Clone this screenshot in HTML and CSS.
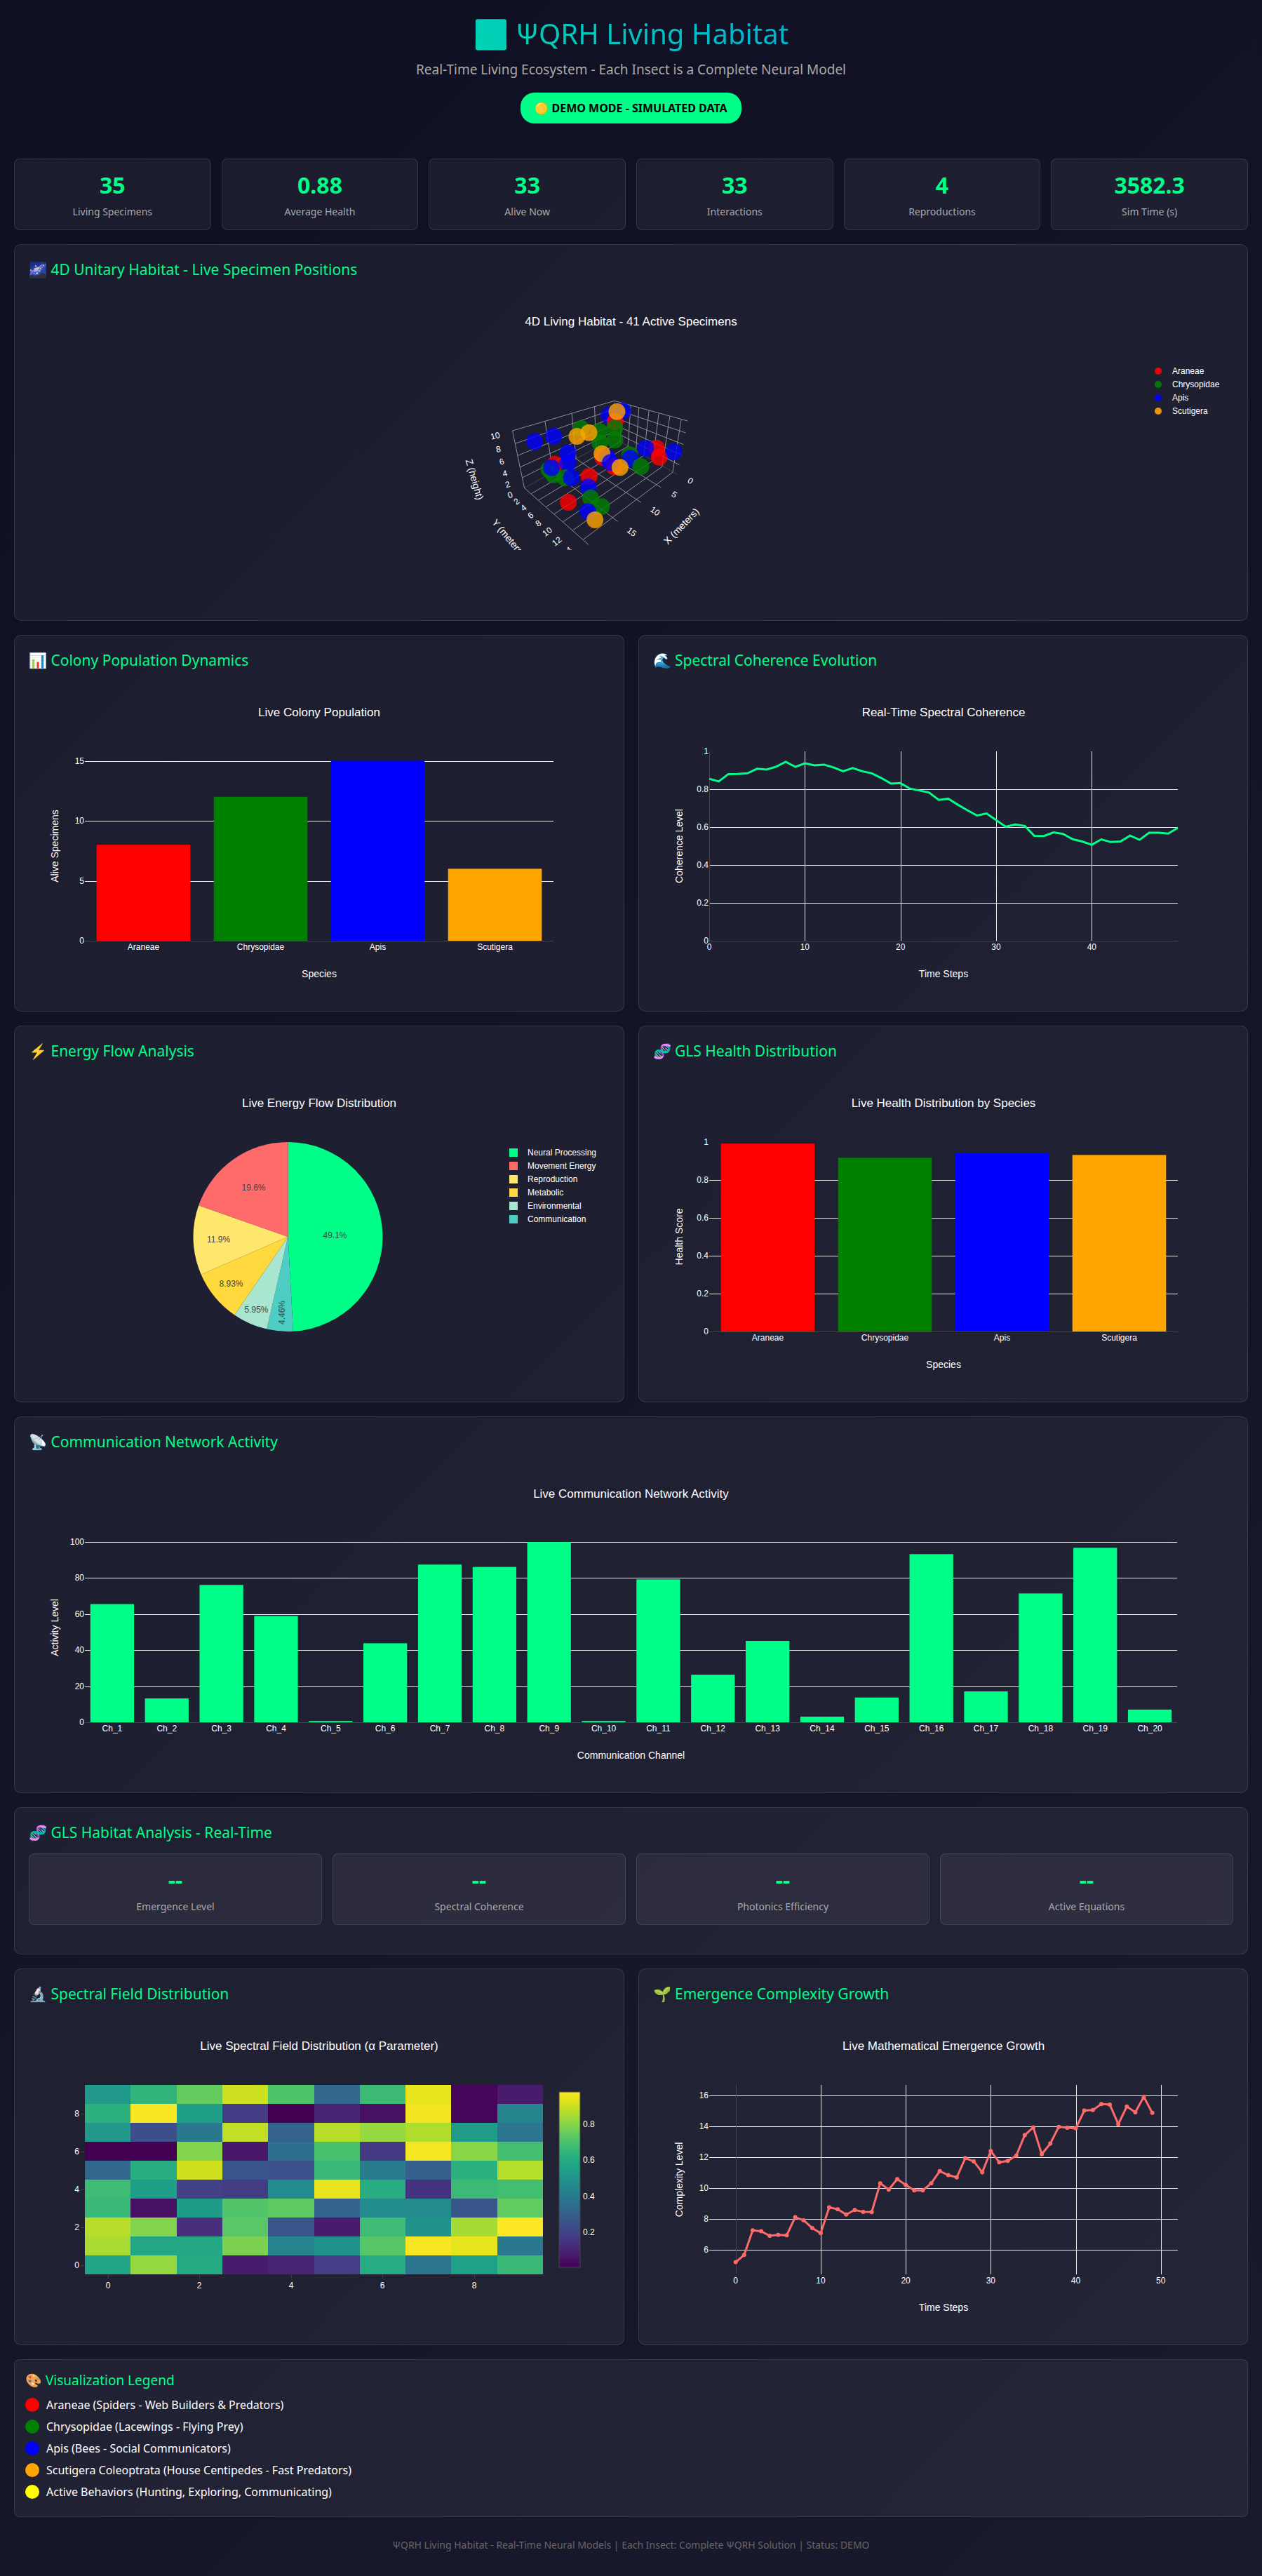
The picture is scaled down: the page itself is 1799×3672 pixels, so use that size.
FILE: index.html
```html
<!DOCTYPE html>
<html lang="en">
<head>
<meta charset="utf-8">
<meta name="viewport" content="width=device-width, initial-scale=1">
<title>ΨQRH Living Habitat</title>
<link rel="stylesheet" href="styles.css">
</head>
<body>
<header class="header">
  <h1 class="header-title">🌌 ΨQRH Living Habitat</h1>
  <p class="header-subtitle">Real-Time Living Ecosystem - Each Insect is a Complete Neural Model</p>
  <div class="status-badge">🟡 DEMO MODE - SIMULATED DATA</div>
</header>

<main class="dashboard">
  <section class="stats stats-six" aria-label="Habitat statistics">
    <div class="stat"><div class="stat-value">35</div><div class="stat-label">Living Specimens</div></div>
    <div class="stat"><div class="stat-value">0.88</div><div class="stat-label">Average Health</div></div>
    <div class="stat"><div class="stat-value">33</div><div class="stat-label">Alive Now</div></div>
    <div class="stat"><div class="stat-value">33</div><div class="stat-label">Interactions</div></div>
    <div class="stat"><div class="stat-value">4</div><div class="stat-label">Reproductions</div></div>
    <div class="stat"><div class="stat-value">3582.3</div><div class="stat-label">Sim Time (s)</div></div>
  </section>

  <section class="panel">
    <h2 class="panel-title">🌌 4D Unitary Habitat - Live Specimen Positions</h2>
    <div class="chart" id="habitat"></div>
  </section>

  <div class="columns">
    <section class="panel">
      <h2 class="panel-title">📊 Colony Population Dynamics</h2>
      <div class="chart" id="population"></div>
    </section>
    <section class="panel">
      <h2 class="panel-title">🌊 Spectral Coherence Evolution</h2>
      <div class="chart" id="coherence"></div>
    </section>
    <section class="panel">
      <h2 class="panel-title">⚡ Energy Flow Analysis</h2>
      <div class="chart" id="energy"></div>
    </section>
    <section class="panel">
      <h2 class="panel-title">🧬 GLS Health Distribution</h2>
      <div class="chart" id="health"></div>
    </section>
  </div>

  <section class="panel">
    <h2 class="panel-title">📡 Communication Network Activity</h2>
    <div class="chart" id="network"></div>
  </section>

  <section class="panel panel-analysis">
    <h2 class="panel-title">🧬 GLS Habitat Analysis - Real-Time</h2>
    <div class="stats stats-four">
      <div class="stat"><div class="stat-value">--</div><div class="stat-label">Emergence Level</div></div>
      <div class="stat"><div class="stat-value">--</div><div class="stat-label">Spectral Coherence</div></div>
      <div class="stat"><div class="stat-value">--</div><div class="stat-label">Photonics Efficiency</div></div>
      <div class="stat"><div class="stat-value">--</div><div class="stat-label">Active Equations</div></div>
    </div>
  </section>

  <div class="columns">
    <section class="panel">
      <h2 class="panel-title">🔬 Spectral Field Distribution</h2>
      <div class="chart" id="field"></div>
    </section>
    <section class="panel">
      <h2 class="panel-title">🌱 Emergence Complexity Growth</h2>
      <div class="chart" id="growth"></div>
    </section>
  </div>

  <section class="legend">
    <h2 class="legend-title">🎨 Visualization Legend</h2>
    <ul class="legend-list">
      <li class="legend-item"><span class="dot dot-araneae"></span>Araneae (Spiders - Web Builders &amp; Predators)</li>
      <li class="legend-item"><span class="dot dot-chrysopidae"></span>Chrysopidae (Lacewings - Flying Prey)</li>
      <li class="legend-item"><span class="dot dot-apis"></span>Apis (Bees - Social Communicators)</li>
      <li class="legend-item"><span class="dot dot-scutigera"></span>Scutigera Coleoptrata (House Centipedes - Fast Predators)</li>
      <li class="legend-item"><span class="dot dot-active"></span>Active Behaviors (Hunting, Exploring, Communicating)</li>
    </ul>
  </section>
</main>

<footer class="footer">ΨQRH Living Habitat - Real-Time Neural Models | Each Insect: Complete ΨQRH Solution | Status: DEMO</footer>
<script src="charts.js"></script>
</body>
</html>
```
FILE: styles.css
```css
* {
  box-sizing: border-box;
  margin: 0;
  padding: 0;
}

body {
  min-height: 100vh;
  padding: 20px;
  background: linear-gradient(135deg, #0f0f23 0%, #1a1a2e 100%);
  color: #fff;
  font-family: "Noto Sans", sans-serif;
  font-size: 16px;
}

.header {
  display: flex;
  flex-direction: column;
  align-items: center;
  padding-bottom: 50px;
  text-align: center;
}

.header-title {
  width: 100%;
  background: linear-gradient(45deg, #00ff88, #0088ff);
  background-clip: text;
  -webkit-background-clip: text;
  color: transparent;
  font-size: 40px;
  font-weight: 400;
  line-height: 56px;
}

.header-subtitle {
  margin: 10px 0 20px;
  color: #aaa;
  font-size: 19px;
  line-height: 26px;
}

.status-badge {
  padding: 10px 20px;
  border-radius: 20px;
  background: #00ff88;
  color: #000;
  font-weight: 700;
  line-height: 24px;
}

.dashboard {
  display: flex;
  flex-direction: column;
  gap: 20px;
}

.stats {
  display: grid;
  gap: 15px;
}

.stats-six {
  grid-template-columns: repeat(6, 1fr);
}

.stats-four {
  grid-template-columns: repeat(4, 1fr);
}

.stat {
  padding: 15px;
  border: 1px solid rgba(255, 255, 255, 0.1);
  border-radius: 8px;
  background: rgba(255, 255, 255, 0.05);
  text-align: center;
}

.stat-value {
  margin-bottom: 6px;
  color: #00ff88;
  font-size: 32px;
  font-weight: 700;
  line-height: 44px;
}

.stat-label {
  color: #aaa;
  font-size: 14px;
  line-height: 20px;
}

.columns {
  display: grid;
  grid-template-columns: repeat(2, minmax(0, 1fr));
  gap: 20px;
}

.panel {
  min-width: 0;
  padding: 20px;
  border: 1px solid rgba(255, 255, 255, 0.1);
  border-radius: 10px;
  background: rgba(255, 255, 255, 0.05);
}

.panel-analysis {
  padding-bottom: 41px;
}

.panel-title {
  margin-bottom: 15px;
  color: #00ff88;
  font-size: 21px;
  font-weight: 400;
  line-height: 30px;
}

.chart {
  height: 450px;
}

.chart-svg {
  display: block;
  width: 100%;
  height: 100%;
}

.chart-svg text {
  fill: #fff;
  font-family: "Liberation Sans", Arial, sans-serif;
  font-size: 12px;
}

.chart-svg .chart-title {
  font-size: 17px;
}

.chart-svg .axis-title {
  font-size: 14px;
}

.chart-svg .slice-label {
  fill: #444;
}

.legend {
  padding: 15px;
  border: 1px solid rgba(255, 255, 255, 0.1);
  border-radius: 8px;
  background: rgba(255, 255, 255, 0.05);
}

.legend-title {
  margin-bottom: 10px;
  color: #00ff88;
  font-size: 19px;
  font-weight: 400;
  line-height: 28px;
}

.legend-list {
  list-style: none;
}

.legend-item {
  display: flex;
  align-items: center;
  gap: 10px;
  padding-bottom: 9px;
  line-height: 22px;
}

.dot {
  width: 20px;
  height: 20px;
  border-radius: 50%;
}

.dot-araneae { background: #ff0000; }
.dot-chrysopidae { background: #008000; }
.dot-apis { background: #0000ff; }
.dot-scutigera { background: #ffa500; }
.dot-active { background: #ffff00; }

.footer {
  padding: 30px 0 12px;
  color: #666;
  font-size: 14px;
  line-height: 20px;
  text-align: center;
}
```
FILE: charts.js
```js
const NS = "http://www.w3.org/2000/svg";
const HEIGHT = 450;
const MARGIN = { left: 80, right: 80, top: 100, bottom: 80 };
const GRID = "#eee";
const ZERO = "#444";
const SPECIES = ["Araneae", "Chrysopidae", "Apis", "Scutigera"];
const SPECIES_COLORS = ["#ff0000", "#008000", "#0000ff", "#ffa500"];

function add(parent, tag, attrs, text) {
  const node = document.createElementNS(NS, tag);
  for (const key in attrs) node.setAttribute(key, attrs[key]);
  if (text !== undefined) node.textContent = text;
  parent.appendChild(node);
  return node;
}

function begin(id, title) {
  const host = document.getElementById(id);
  host.replaceChildren();
  const width = host.clientWidth;
  const svg = add(host, "svg", { class: "chart-svg", role: "img", "aria-label": title });
  add(svg, "text", { class: "chart-title", x: width / 2, y: 50, "text-anchor": "middle" }, title);
  return {
    svg, width,
    left: MARGIN.left, right: width - MARGIN.right,
    top: MARGIN.top, bottom: HEIGHT - MARGIN.bottom
  };
}

function hline(c, y, color) {
  add(c.svg, "line", { x1: c.left, x2: c.right, y1: y, y2: y, stroke: color, "shape-rendering": "crispEdges" });
}

function vline(c, x, color) {
  add(c.svg, "line", { x1: x, x2: x, y1: c.top, y2: c.bottom, stroke: color, "shape-rendering": "crispEdges" });
}

function axisTitles(c, xTitle, yTitle) {
  add(c.svg, "text", { class: "axis-title", x: (c.left + c.right) / 2, y: 422, "text-anchor": "middle" }, xTitle);
  const mid = (c.top + c.bottom) / 2;
  add(c.svg, "text", { class: "axis-title", transform: `translate(42 ${mid}) rotate(-90)`, "text-anchor": "middle" }, yTitle);
}

function yTick(c, y, label) {
  add(c.svg, "text", { x: c.left - 1, y: y + 4, "text-anchor": "end" }, label);
}

function xTick(c, x, label) {
  add(c.svg, "text", { x, y: c.bottom + 13, "text-anchor": "middle" }, label);
}

function barChart(id, o) {
  const c = begin(id, o.title);
  const sy = v => c.bottom - (v / o.max) * (c.bottom - c.top);
  o.ticks.forEach(t => {
    if (t > 0 && t < o.max) hline(c, Math.round(sy(t)), GRID);
    yTick(c, sy(t), t);
  });
  const band = (c.right - c.left) / o.values.length;
  o.values.forEach((v, i) => {
    add(c.svg, "rect", {
      x: c.left + band * (i + 0.1), y: sy(v), width: band * 0.8, height: c.bottom - sy(v),
      fill: o.colors[i % o.colors.length]
    });
    xTick(c, c.left + band * (i + 0.5), o.labels[i]);
  });
  hline(c, c.bottom, ZERO);
  axisTitles(c, o.xTitle, o.yTitle);
}

function lineChart(id, o) {
  const c = begin(id, o.title);
  const sx = v => c.left + (v - o.x[0]) / (o.x[1] - o.x[0]) * (c.right - c.left);
  const sy = v => c.bottom - (v - o.y[0]) / (o.y[1] - o.y[0]) * (c.bottom - c.top);
  o.xTicks.forEach(t => {
    if (t !== 0) vline(c, Math.round(sx(t)), GRID);
    xTick(c, sx(t), t);
  });
  o.yTicks.forEach(t => {
    if (t > o.y[0] && t < o.y[1]) hline(c, Math.round(sy(t)), GRID);
    yTick(c, sy(t), t);
  });
  vline(c, Math.round(sx(0)), ZERO);
  if (o.y[0] === 0) hline(c, c.bottom, ZERO);
  add(c.svg, "polyline", {
    points: o.values.map((v, i) => `${sx(i)},${sy(v)}`).join(" "),
    fill: "none", stroke: o.color, "stroke-width": 3
  });
  if (o.markers) {
    o.values.forEach((v, i) => add(c.svg, "circle", { cx: sx(i), cy: sy(v), r: 3, fill: o.color }));
  }
  axisTitles(c, "Time Steps", o.yTitle);
}

function pieChart(id) {
  const c = begin(id, "Live Energy Flow Distribution");
  const slices = [
    ["Neural Processing", 49.1, "#00ff88", "49.1%", 67, -2],
    ["Movement Energy", 19.6, "#ff6b6b", "19.6%", -49, -70],
    ["Reproduction", 11.9, "#ffe66d", "11.9%", -99, 4],
    ["Metabolic", 8.93, "#ffd93d", "8.93%", -81, 67],
    ["Environmental", 5.95, "#a8e6cf", "5.95%", -45, 104],
    ["Communication", 4.46, "#4ecdc4", "4.46%", -9, 108]
  ];
  const legendWidth = 169;
  const cx = (c.left + c.width - legendWidth) / 2;
  const cy = (c.top + c.bottom) / 2;
  const r = 135;
  const total = slices.reduce((sum, s) => sum + s[1], 0);
  const order = [slices[0], ...slices.slice(1).reverse()];
  let angle = 0;
  order.forEach(([, value, color, label, dx, dy]) => {
    const end = angle + value / total * Math.PI * 2;
    add(c.svg, "path", {
      d: `M${cx},${cy}L${cx + r * Math.sin(angle)},${cy - r * Math.cos(angle)}` +
         `A${r},${r} 0 0 1 ${cx + r * Math.sin(end)},${cy - r * Math.cos(end)}Z`,
      fill: color
    });
    const turn = value < 5 ? " rotate(-90)" : "";
    add(c.svg, "text", {
      class: "slice-label", y: 4, "text-anchor": "middle",
      transform: `translate(${cx + dx} ${cy + dy})${turn}`
    }, label);
    angle = end;
  });
  const x = c.width - 137;
  slices.forEach(([name, , color], i) => {
    const y = 115 + i * 19;
    add(c.svg, "rect", { x: x - 6, y: y - 6, width: 12, height: 12, fill: color });
    add(c.svg, "text", { x: x + 20, y: y + 4 }, name);
  });
}

const VIRIDIS = ["440154", "48186a", "472d7b", "424086", "3b528b", "33638d", "2c728e", "26828e", "21918c",
  "1fa088", "28ae80", "3fbc73", "5ec962", "84d44b", "addc30", "d8e219", "fde725"]
  .map(h => [0, 2, 4].map(i => parseInt(h.slice(i, i + 2), 16)));

function viridis(v) {
  const p = Math.min(v, 0.9999) * (VIRIDIS.length - 1);
  const i = Math.floor(p);
  const mix = VIRIDIS[i].map((a, k) => Math.round(a + (VIRIDIS[i + 1][k] - a) * (p - i)));
  return `rgb(${mix.join()})`;
}

/* Field rows, from y = 9 down to y = 0. */
const FIELD = [
  [.53, .65, .76, .92, .72, .33, .68, .965, .01, .07],
  [.635, .995, .56, .175, 0, .1, .04, .98, .01, .45],
  [.535, .235, .4, .905, .305, .89, .84, .88, .55, .385],
  [0, 0, .81, .06, .36, .71, .165, .985, .82, .7],
  [.33, .62, .925, .26, .245, .67, .41, .3, .635, .885],
  [.685, .555, .19, .17, .47, .965, .62, .145, .68, .695],
  [.67, .04, .54, .725, .75, .31, .48, .475, .265, .755],
  [.89, .81, .13, .74, .26, .07, .685, .51, .865, 1],
  [.87, .59, .6, .8, .44, .5, .735, .99, .96, .4],
  [.58, .835, .605, .075, .1, .18, .61, .39, .565, .67]
];

function heatmap(id) {
  const c = begin(id, "Live Spectral Field Distribution (α Parameter)");
  c.right = c.width - 95;
  const w = (c.right - c.left) / 10;
  const h = (c.bottom - c.top) / 10;
  FIELD.forEach((row, r) => row.forEach((v, i) => {
    const x0 = Math.round(c.left + i * w);
    const x1 = Math.round(c.left + (i + 1) * w);
    add(c.svg, "rect", { x: x0, y: c.top + r * h, width: x1 - x0, height: h, fill: viridis(v) });
  }));
  for (let t = 0; t < 10; t += 2) {
    const x = Math.round(c.left + (t + 0.5) * w);
    const y = Math.round(c.bottom - (t + 0.5) * h);
    add(c.svg, "line", { x1: x, x2: x, y1: c.bottom + 1, y2: c.bottom + 6, stroke: ZERO, "shape-rendering": "crispEdges" });
    add(c.svg, "line", { x1: c.left - 6, x2: c.left - 1, y1: y, y2: y, stroke: ZERO, "shape-rendering": "crispEdges" });
    add(c.svg, "text", { x, y: c.bottom + 20, "text-anchor": "middle" }, t);
    add(c.svg, "text", { x: c.left - 8, y: y + 4, "text-anchor": "end" }, t);
  }
  const gradient = add(add(c.svg, "defs", {}), "linearGradient", { id: "scale", x1: 0, y1: 1, x2: 0, y2: 0 });
  VIRIDIS.forEach((_, i) => add(gradient, "stop", { offset: i / 16, "stop-color": viridis(i / 16) }));
  const x = c.right + 23;
  add(c.svg, "rect", { x, y: 110, width: 30, height: 250, fill: "url(#scale)", stroke: ZERO });
  ["0.8", "0.6", "0.4", "0.2"].forEach((t, i) => add(c.svg, "text", { x: x + 34, y: 160 + Math.round(i * 51.3) }, t));
}

/* Projected scene coordinates, three units to the pixel. */
const SCENE_GRID = [
  [390, 582, 826, 454], [401, 637, 825, 489], [412, 688, 824, 524], [424, 737, 824, 555], [434, 782, 823, 585],
  [826, 454, 1139, 540], [825, 489, 1131, 591], [824, 524, 1122, 641], [824, 555, 1113, 686], [823, 585, 1104, 728],
  [390, 582, 441, 827], [529, 541, 563, 758], [644, 507, 662, 702], [741, 478, 748, 654],
  [860, 463, 851, 629], [896, 472, 884, 648], [931, 483, 918, 668], [974, 494, 952, 688],
  [1016, 508, 990, 710], [1063, 520, 1030, 736], [1112, 535, 1075, 760],
  [563, 758, 840, 970], [662, 702, 940, 889], [748, 654, 1025, 824],
  [441, 827, 715, 1069],
  [471, 851, 851, 629], [502, 879, 884, 648], [534, 907, 918, 668], [569, 938, 952, 688],
  [607, 971, 990, 710], [648, 1008, 1030, 736], [692, 1048, 1075, 760]
];
const SCENE_ZERO = [[441, 827, 822, 612], [822, 612, 1095, 769], [826, 454, 822, 612]];
const SPECIMENS = [
  [1, 684, 573], [1, 762, 585], [2, 862, 498], [2, 803, 516], [0, 829, 543], [1, 828, 570], [3, 837, 500],
  [1, 763, 632], [1, 828, 622], [3, 666, 606], [3, 717, 590], [2, 485, 628], [2, 566, 605],
  [1, 892, 685], [2, 894, 700], [0, 1006, 656], [2, 960, 657], [0, 1018, 695], [2, 1080, 672], [1, 939, 735],
  [0, 775, 695], [2, 796, 697], [3, 773, 680], [0, 825, 736], [2, 809, 718], [3, 850, 739],
  [0, 572, 725], [1, 546, 748], [1, 565, 770], [2, 557, 740], [2, 627, 677], [2, 627, 721],
  [1, 615, 783], [2, 642, 783], [0, 718, 777], [2, 714, 822], [0, 629, 888],
  [1, 724, 869], [1, 771, 906], [2, 712, 928], [3, 743, 963]
];
const SCENE_LABELS = [
  ["10", 316, 604, -12], ["8", 330, 661, -12], ["6", 344, 714, -14], ["4", 358, 765, -14], ["2", 369, 812, -16], ["0", 380, 857, -20],
  ["2", 408, 884, -38], ["4", 438, 912, -38], ["6", 468, 944, -38], ["8", 501, 978, -38], ["10", 539, 1014, -38], ["12", 580, 1055, -38], ["14", 624, 1098, -38],
  ["0", 1151, 796, 32], ["5", 1082, 855, 33], ["10", 1000, 926, 35], ["15", 900, 1015, 37]
];
const SCENE_TITLES = [["Z (height)", 228, 790, 74], ["Y (meters)", 374, 1040, 50], ["X (meters)", 1112, 990, -46]];

function scene(id) {
  const c = begin(id, "4D Living Habitat - 41 Active Specimens");
  const clip = add(add(c.svg, "defs", {}), "clipPath", { id: "scene-area" });
  add(clip, "rect", { x: c.left, y: c.top, width: c.right - c.left, height: c.bottom - c.top });
  const g = add(c.svg, "g", { "clip-path": "url(#scene-area)" });
  const px = x => x / 3 - 299 + c.width / 2;
  const py = y => y / 3 + 6;
  const seg = (l, color) => add(g, "line", { x1: px(l[0]), y1: py(l[1]), x2: px(l[2]), y2: py(l[3]), stroke: color });
  SCENE_ZERO.forEach(l => seg(l, ZERO));
  SCENE_GRID.forEach(l => seg(l, "#8e8e96"));
  SPECIMENS.forEach(([s, x, y]) => add(g, "circle", { cx: px(x), cy: py(y), r: 12, fill: SPECIES_COLORS[s], "fill-opacity": 0.8 }));
  const put = (list, cls, dy) => list.forEach(([t, x, y, a]) => add(g, "text", {
    class: cls, y: dy, "text-anchor": "middle", transform: `translate(${px(x)} ${py(y)}) rotate(${a})`
  }, t));
  put(SCENE_LABELS, "scene-label", 4);
  put(SCENE_TITLES, "axis-title", 5);
  SPECIES.forEach((name, i) => {
    add(c.svg, "circle", { cx: c.width - 107, cy: 115 + i * 19, r: 5, fill: SPECIES_COLORS[i], "fill-opacity": 0.9 });
    add(c.svg, "text", { x: c.width - 87, y: 119 + i * 19 }, name);
  });
}

const COHERENCE = [.855, .841, .88, .881, .884, .908, .904, .919, .945, .918, .937, .926, .93, .915, .895, .912, .895,
  .884, .859, .83, .832, .803, .793, .782, .744, .75, .718, .689, .661, .672, .637, .602, .614, .606, .554, .553,
  .572, .564, .536, .524, .507, .535, .521, .524, .555, .533, .57, .57, .566, .596];
const GROWTH = [5.21, 5.68, 7.27, 7.21, 6.92, 6.98, 6.95, 8.12, 7.92, 7.42, 7.09, 8.76, 8.64, 8.29, 8.59, 8.47, 8.45,
  10.32, 9.91, 10.59, 10.21, 9.86, 9.86, 10.32, 11.11, 10.85, 10.7, 11.95, 11.74, 11.03, 12.41, 11.68, 11.77, 12.11,
  13.44, 13.94, 12.2, 12.89, 13.98, 13.92, 13.88, 15.03, 15.06, 15.45, 15.42, 14.15, 15.29, 14.92, 15.92, 14.88];
const CHANNELS = [65.5, 13.2, 76.1, 58.9, .7, 43.8, 87.4, 86.1, 99.9, .7, 79.2, 26.3, 45.1, 3.1, 13.7, 93.2, 17.1, 71.4, 96.7, 7];

function draw() {
  scene("habitat");
  barChart("population", {
    title: "Live Colony Population", xTitle: "Species", yTitle: "Alive Specimens",
    values: [8, 12, 15, 6], labels: SPECIES, colors: SPECIES_COLORS, max: 15.79, ticks: [0, 5, 10, 15]
  });
  lineChart("coherence", {
    title: "Real-Time Spectral Coherence", yTitle: "Coherence Level", values: COHERENCE, color: "#00ff88",
    x: [0, 49], y: [0, 1], xTicks: [0, 10, 20, 30, 40], yTicks: [0, 0.2, 0.4, 0.6, 0.8, 1]
  });
  pieChart("energy");
  barChart("health", {
    title: "Live Health Distribution by Species", xTitle: "Species", yTitle: "Health Score",
    values: [.992, .917, .941, .932], labels: SPECIES, colors: SPECIES_COLORS, max: 1, ticks: [0, 0.2, 0.4, 0.6, 0.8, 1]
  });
  barChart("network", {
    title: "Live Communication Network Activity", xTitle: "Communication Channel", yTitle: "Activity Level",
    values: CHANNELS, labels: CHANNELS.map((_, i) => "Ch_" + (i + 1)), colors: ["#00ff88"],
    max: 105, ticks: [0, 20, 40, 60, 80, 100]
  });
  heatmap("field");
  lineChart("growth", {
    title: "Live Mathematical Emergence Growth", yTitle: "Complexity Level", values: GROWTH, color: "#ff6b6b", markers: true,
    x: [-3.11, 52], y: [4.42, 16.69], xTicks: [0, 10, 20, 30, 40, 50], yTicks: [6, 8, 10, 12, 14, 16]
  });
}

draw();
window.addEventListener("resize", draw);
```
